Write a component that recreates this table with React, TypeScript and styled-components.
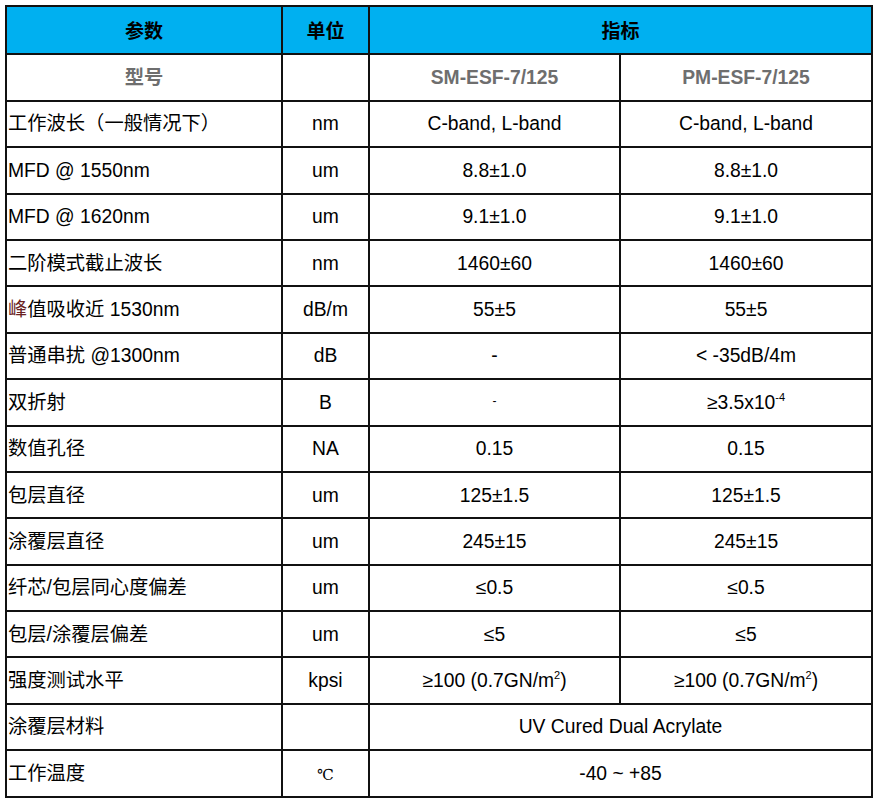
import { Fragment } from 'react'
import styled, { createGlobalStyle } from 'styled-components'

const GlobalStyle = createGlobalStyle`
  html, body {
    margin: 0;
    padding: 0;
    background: #ffffff;
  }

  body {
    font-family: 'Liberation Sans', 'Noto Sans CJK SC', sans-serif;
    color: #000000;
  }
`

const Page = styled.div`
  padding: 5px 0 0 5px;
`

const SpecTable = styled.table`
  width: 866px;
  border-collapse: collapse;
  table-layout: fixed;
  border: 2px solid #111111;
  font-size: 19.3px;
  line-height: 1.2;
`

const HeadCell = styled.th`
  height: 46.4px;
  padding: 0;
  border: 2px solid #111111;
  background: #00b0f0;
  font-weight: 700;
  font-family: 'Noto Sans CJK SC', sans-serif;
  font-size: 19px;
  text-align: center;
`

const Row = styled.tr`
  height: 46.4px;
`

const Cell = styled.td<{ $align?: 'left' | 'center'; $muted?: boolean }>`
  padding: 0 0 0 ${({ $align }) => ($align === 'left' ? '1px' : '0')};
  border: 2px solid #111111;
  text-align: ${({ $align }) => $align ?? 'center'};
  vertical-align: middle;
  white-space: nowrap;
  color: ${({ $muted }) => ($muted ? '#6e6e6e' : '#000000')};
  font-weight: ${({ $muted }) => ($muted ? 700 : 400)};
`

const Sup = styled.sup`
  font-size: 11px;
  vertical-align: 8px;
  line-height: 0;
`

const TinyDash = styled.span`
  font-size: 12px;
  position: relative;
  top: -4px;
`

const Accent = styled.span`
  color: #6a1f1f;
`

const Celsius = styled.span`
  font-family: 'DejaVu Serif', 'DejaVu Sans', serif;
  font-size: 15px;
`

type Spec = {
  name: React.ReactNode
  unit: React.ReactNode
  sm: React.ReactNode
  pm?: React.ReactNode
}

const specs: Spec[] = [
  { name: '工作波长（一般情况下）', unit: 'nm', sm: 'C-band, L-band', pm: 'C-band, L-band' },
  { name: 'MFD @ 1550nm', unit: 'um', sm: '8.8±1.0', pm: '8.8±1.0' },
  { name: 'MFD @ 1620nm', unit: 'um', sm: '9.1±1.0', pm: '9.1±1.0' },
  { name: '二阶模式截止波长', unit: 'nm', sm: '1460±60', pm: '1460±60' },
  {
    name: (
      <>
        <Accent>峰</Accent>值吸收近 1530nm
      </>
    ),
    unit: 'dB/m',
    sm: '55±5',
    pm: '55±5',
  },
  { name: '普通串扰 @1300nm', unit: 'dB', sm: '-', pm: '< -35dB/4m' },
  {
    name: '双折射',
    unit: 'B',
    sm: <TinyDash>-</TinyDash>,
    pm: (
      <>
        ≥3.5x10<Sup>-4</Sup>
      </>
    ),
  },
  { name: '数值孔径', unit: 'NA', sm: '0.15', pm: '0.15' },
  { name: '包层直径', unit: 'um', sm: '125±1.5', pm: '125±1.5' },
  { name: '涂覆层直径', unit: 'um', sm: '245±15', pm: '245±15' },
  { name: '纤芯/包层同心度偏差', unit: 'um', sm: '≤0.5', pm: '≤0.5' },
  { name: '包层/涂覆层偏差', unit: 'um', sm: '≤5', pm: '≤5' },
  {
    name: '强度测试水平',
    unit: 'kpsi',
    sm: (
      <>
        ≥100 (0.7GN/m<Sup>2</Sup>)
      </>
    ),
    pm: (
      <>
        ≥100 (0.7GN/m<Sup>2</Sup>)
      </>
    ),
  },
  { name: '涂覆层材料', unit: '', sm: 'UV Cured Dual Acrylate' },
  { name: '工作温度', unit: <Celsius>℃</Celsius>, sm: '-40 ~ +85' },
]

export default function App() {
  return (
    <Page>
      <GlobalStyle />
      <SpecTable>
        <colgroup>
          <col style={{ width: 276 }} />
          <col style={{ width: 87 }} />
          <col style={{ width: 251 }} />
          <col style={{ width: 252 }} />
        </colgroup>
        <thead>
          <tr>
            <HeadCell>参数</HeadCell>
            <HeadCell>单位</HeadCell>
            <HeadCell colSpan={2}>指标</HeadCell>
          </tr>
        </thead>
        <tbody>
          <Row>
            <Cell $muted>型号</Cell>
            <Cell />
            <Cell $muted>SM-ESF-7/125</Cell>
            <Cell $muted>PM-ESF-7/125</Cell>
          </Row>
          {specs.map((s, i) => (
            <Row key={i}>
              <Cell $align="left">{s.name}</Cell>
              <Cell>{s.unit}</Cell>
              {s.pm === undefined ? (
                <Cell colSpan={2}>{s.sm}</Cell>
              ) : (
                <Fragment>
                  <Cell>{s.sm}</Cell>
                  <Cell>{s.pm}</Cell>
                </Fragment>
              )}
            </Row>
          ))}
        </tbody>
      </SpecTable>
    </Page>
  )
}
